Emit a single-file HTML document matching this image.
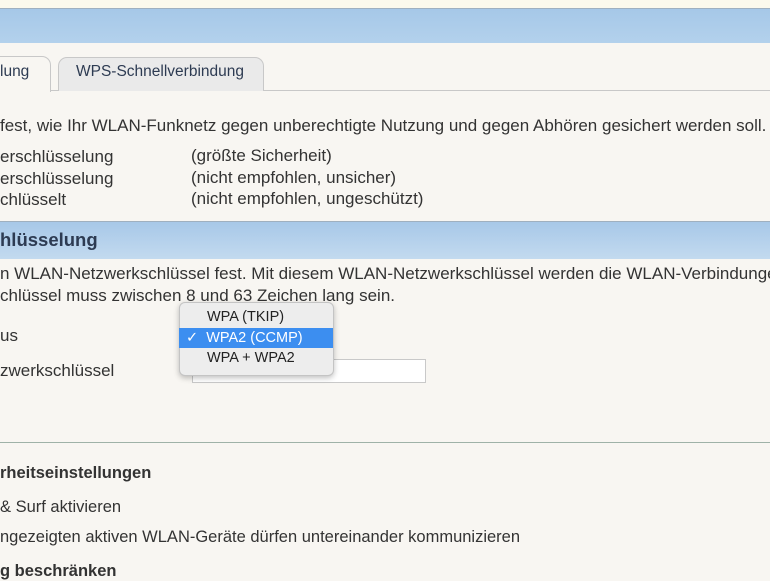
<!DOCTYPE html>
<html><head><meta charset="utf-8"><style>
html,body{margin:0;padding:0}
body{width:770px;height:578px;overflow:hidden;background:#f8f6f2;position:relative;font-family:"Liberation Sans",Arial,sans-serif;font-size:17px;color:#333}
.a{position:absolute;white-space:nowrap;line-height:20px}
.b{font-weight:bold}
</style></head><body>
<div style="position:absolute;left:0;top:0;width:770px;height:8px;background:#fbf9ec"></div>
<div style="position:absolute;left:0;top:8px;width:770px;height:34px;background:linear-gradient(#a6c8e8,#b3d1ec);border-top:1px solid #9fb0bf"></div>
<div style="position:absolute;left:0;top:90px;width:770px;height:1px;background:#c8c8c8"></div>
<div style="position:absolute;left:-10px;top:56px;width:59px;height:35px;background:#f8f6f2;border:1px solid #c8c8c8;border-bottom:none;border-radius:0 9px 0 0"></div>
<div style="position:absolute;left:58px;top:57px;width:204px;height:33px;background:#eaeaea;border:1px solid #c8c8c8;border-bottom:none;border-radius:9px 9px 0 0"></div>
<div class="a" style="left:0;top:62px;color:#2d3b52;font-size:15.5px">lung</div>
<div class="a" style="left:76px;top:62px;color:#2d3b52;font-size:15.5px">WPS-Schnellverbindung</div>
<div class="a" style="left:0;top:116px">fest, wie Ihr WLAN-Funknetz gegen unberechtigte Nutzung und gegen Abhören gesichert werden soll.</div>
<div class="a" style="left:0;top:147px">erschlüsselung</div>
<div class="a" style="left:0;top:169px">erschlüsselung</div>
<div class="a" style="left:0;top:190px">chlüsselt</div>
<div class="a" style="left:191px;top:146px">(größte Sicherheit)</div>
<div class="a" style="left:191px;top:168px">(nicht empfohlen, unsicher)</div>
<div class="a" style="left:191px;top:189px">(nicht empfohlen, ungeschützt)</div>
<div style="position:absolute;left:0;top:221px;width:770px;height:37px;background:linear-gradient(#a7c8e8,#c3daef);border-top:1px solid #9fb0bf"></div>
<div class="a b" style="left:0;top:230px;font-size:18.5px;color:#2d3b52">hlüsselung</div>
<div class="a" style="left:0;top:264px">n WLAN-Netzwerkschlüssel fest. Mit diesem WLAN-Netzwerkschlüssel werden die WLAN-Verbindungen</div>
<div class="a" style="left:0;top:286px">chlüssel muss zwischen 8 und 63 Zeichen lang sein.</div>
<div class="a" style="left:0;top:326px">us</div>
<div class="a" style="left:0;top:361px">zwerkschlüssel</div>
<div style="position:absolute;left:192px;top:359px;width:232px;height:22px;background:#fff;border:1px solid #c9c9c9"></div>
<div style="position:absolute;left:179px;top:302px;width:153px;height:72px;background:#ededed;border:1px solid #c4c4c4;border-radius:6px;box-shadow:0 2px 6px rgba(0,0,0,.25)"></div>
<div style="position:absolute;left:179px;top:328px;width:154px;height:20px;background:#3c8ef0"></div>
<div class="a" style="left:207px;top:307px;font-size:14.5px;color:#222">WPA (TKIP)</div>
<div class="a" style="left:186px;top:328px;font-size:14.5px;color:#fff">✓&nbsp; WPA2 (CCMP)</div>
<div class="a" style="left:207px;top:348px;font-size:14.5px;color:#222">WPA + WPA2</div>
<div style="position:absolute;left:0;top:442px;width:770px;height:1px;background:#9fb2a8"></div>
<div class="a b" style="left:0;top:463px;font-size:16.5px">rheitseinstellungen</div>
<div class="a" style="left:0;top:497px;font-size:16.5px">&amp; Surf aktivieren</div>
<div class="a" style="left:0;top:527px;font-size:16.5px">ngezeigten aktiven WLAN-Geräte dürfen untereinander kommunizieren</div>
<div class="a b" style="left:0;top:561px;font-size:16.5px">g beschränken</div>
</body></html>
